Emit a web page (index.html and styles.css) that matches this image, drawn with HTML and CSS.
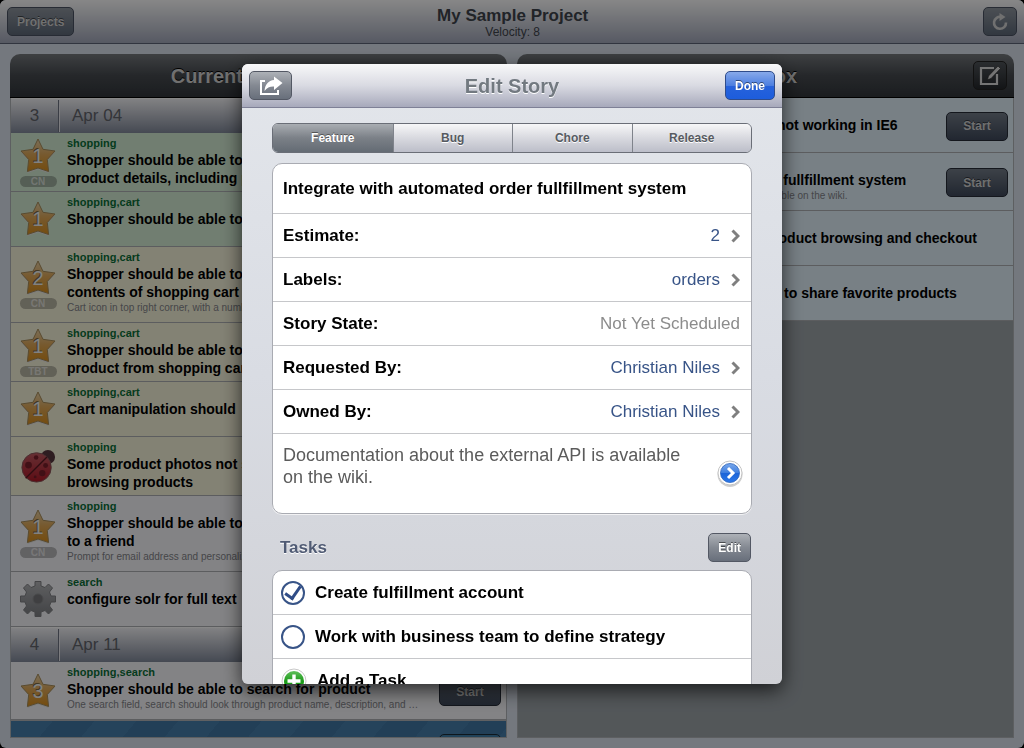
FILE: index.html
```html
<!DOCTYPE html>
<html lang="en">
<head>
  <meta charset="UTF-8">
  <meta name="viewport" content="width=device-width, initial-scale=1.0">
  <title>My Sample Project</title>
  <link rel="stylesheet" href="styles.css">
</head>
<body>
  <!-- shared shapes -->
  <svg width="0" height="0" class="defs" aria-hidden="true">
    <defs>
      <linearGradient id="gold" x1="0" y1="0" x2="0" y2="1">
        <stop offset="0" stop-color="#e8cfa4"/>
        <stop offset="0.5" stop-color="#e0a856"/>
        <stop offset="1" stop-color="#dc901c"/>
      </linearGradient>
      <linearGradient id="steel" x1="0" y1="0" x2="0" y2="1">
        <stop offset="0" stop-color="#b4b5b8"/>
        <stop offset="1" stop-color="#7d7f83"/>
      </linearGradient>
      <linearGradient id="red" x1="0" y1="0" x2="0" y2="1">
        <stop offset="0" stop-color="#c25a62"/>
        <stop offset="1" stop-color="#b01826"/>
      </linearGradient>
      <linearGradient id="green" x1="0" y1="0" x2="0" y2="1">
        <stop offset="0" stop-color="#5fbf5a"/>
        <stop offset="0.5" stop-color="#1f9a1c"/>
        <stop offset="1" stop-color="#0fae0a"/>
      </linearGradient>
      <linearGradient id="blue" x1="0" y1="0" x2="0" y2="1">
        <stop offset="0" stop-color="#7aa8ea"/>
        <stop offset="0.5" stop-color="#3c7de0"/>
        <stop offset="0.52" stop-color="#1c64d8"/>
        <stop offset="1" stop-color="#2a78ea"/>
      </linearGradient>
      <symbol id="star" viewBox="0 0 36 36">
        <path d="M18 2.5 L23 12.3 L35 14.2 L27.3 22.5 L28.6 35 L18 31.5 L7.4 35 L8.7 22.5 L1 14.2 L13 12.3 Z" fill="#e8e8e8"/>
        <path d="M18 1 L23 11.3 L35 13 L27.3 21.5 L28.6 33.5 L18 30 L7.4 33.5 L8.7 21.5 L1 13 L13 11.3 Z" fill="url(#gold)" stroke="#a98f5c"/>
      </symbol>
      <symbol id="chevron" viewBox="0 0 9 14">
        <path d="M1.5 1.5 L7 7 L1.5 12.5" fill="none" stroke="#7f7f7f" stroke-width="3"/>
      </symbol>
    </defs>
  </svg>

  <div class="app">
    <header class="topbar">
      <button class="btn btn-bar">Projects</button>
      <div class="project">
        <h1>My Sample Project</h1>
        <p>Velocity: 8</p>
      </div>
      <button class="btn btn-bar btn-icon" aria-label="Refresh">
        <svg width="18" height="18" viewBox="0 0 18 18">
          <path d="M10.5 4 A6 6 0 1 0 15 9.5" fill="none" stroke="#d4d4d4" stroke-width="2.6"/>
          <path d="M8.5 0 L14.5 4 L8.5 8 Z" fill="#d4d4d4"/>
        </svg>
      </button>
    </header>

    <main class="columns">
      <section class="column">
        <div class="column-head"><h2>Current &amp; Backlog</h2></div>
        <div class="stories">
          <div class="iteration"><span class="num">3</span><span class="date">Apr 04</span></div>
          <article class="story accepted">
            <div class="kind">
              <div class="star"><svg><use href="#star"/></svg><span>1</span></div>
              <span class="owner">CN</span>
            </div>
            <div class="text">
              <p class="labels">shopping</p>
              <h3>Shopper should be able to click on a product, see all<br>product details, including photo and price</h3>
            </div>
          </article>
          <article class="story accepted">
            <div class="kind"><div class="star"><svg><use href="#star"/></svg><span>1</span></div></div>
            <div class="text">
              <p class="labels">shopping,cart</p>
              <h3>Shopper should be able to put product in cart</h3>
            </div>
          </article>
          <article class="story started">
            <div class="kind">
              <div class="star"><svg><use href="#star"/></svg><span>2</span></div>
              <span class="owner">CN</span>
            </div>
            <div class="text">
              <p class="labels">shopping,cart</p>
              <h3>Shopper should be able to view<br>contents of shopping cart</h3>
              <p class="desc">Cart icon in top right corner, with a number indicating how many items</p>
            </div>
          </article>
          <article class="story started">
            <div class="kind">
              <div class="star"><svg><use href="#star"/></svg><span>1</span></div>
              <span class="owner">TBT</span>
            </div>
            <div class="text">
              <p class="labels">shopping,cart</p>
              <h3>Shopper should be able to remove<br>product from shopping cart</h3>
            </div>
          </article>
          <article class="story started">
            <div class="kind"><div class="star"><svg><use href="#star"/></svg><span>1</span></div></div>
            <div class="text">
              <p class="labels">shopping,cart</p>
              <h3>Cart manipulation should</h3>
            </div>
          </article>
          <article class="story started">
            <div class="kind">
              <svg width="36" height="36" viewBox="0 0 38 36">
                <circle cx="29.5" cy="8.5" r="7.5" fill="#57383f"/>
                <circle cx="17.5" cy="19.5" r="15.5" fill="url(#red)" stroke="#8a5a5c"/>
                <path d="M6 31 L28.5 8.5" stroke="#5a1a22" stroke-width="1.4"/>
                <g fill="#7a1f2a">
                  <circle cx="9" cy="17" r="3.6"/>
                  <circle cx="17" cy="9" r="2.4"/>
                  <circle cx="27" cy="17.5" r="2.6"/>
                  <circle cx="23.5" cy="25.5" r="3.4"/>
                  <circle cx="16" cy="29.5" r="1.5"/>
                </g>
              </svg>
            </div>
            <div class="text">
              <p class="labels">shopping</p>
              <h3>Some product photos not scaling when<br>browsing products</h3>
            </div>
          </article>
          <article class="story">
            <div class="kind">
              <div class="star"><svg><use href="#star"/></svg><span>1</span></div>
              <span class="owner">CN</span>
            </div>
            <div class="text">
              <p class="labels">shopping</p>
              <h3>Shopper should be able to recommend<br>to a friend</h3>
              <p class="desc">Prompt for email address and personalized message</p>
            </div>
          </article>
          <article class="story">
            <div class="kind">
              <svg width="36" height="36" viewBox="-18 -18 36 36">
                <path d="M-3 -17.5 H3 V-13 L7 -11.5 L10.5 -15 L14.5 -11 L11.500 -7 L13 -3 H17.5 V3 H13 L11.5 7 L14.5 11 L10.5 15 L7 11.5 L3 13 V17.5 H-3 V13 L-7 11.5 L-10.5 15 L-14.5 11 L-11.5 7 L-13 3 H-17.5 V-3 H-13 L-11.5 -7 L-14.5 -11 L-10.5 -15 L-7 -11.5 L-3 -13 Z" fill="url(#steel)" stroke="#808185" stroke-linejoin="round"/>
                <circle r="5" fill="#77787b" stroke="#8b8c8f"/>
              </svg>
            </div>
            <div class="text">
              <p class="labels">search</p>
              <h3>configure solr for full text</h3>
            </div>
          </article>
          <div class="iteration"><span class="num">4</span><span class="date">Apr 11</span></div>
          <article class="story">
            <div class="kind"><div class="star"><svg><use href="#star"/></svg><span>3</span></div></div>
            <div class="text">
              <p class="labels">shopping,search</p>
              <h3>Shopper should be able to search for product</h3>
              <p class="desc">One search field, search should look through product name, description, and SKU</p>
            </div>
            <button class="btn btn-start">Start</button>
          </article>
          <article class="story release">
            <button class="btn btn-finish" aria-label="Finish"></button>
          </article>
        </div>
      </section>

      <section class="column icebox">
        <div class="column-head">
          <h2>Icebox</h2>
          <button class="btn btn-compose btn-icon" aria-label="Add story">
            <svg width="22" height="22" viewBox="0 0 22 22">
              <path d="M15 3 H2 V19 H18 V9" fill="none" stroke="#dcdcdc" stroke-width="2.2"/>
              <path d="M19 1 L21.5 3.5 L12 13.5 L8.5 14.8 L9.5 11 Z" fill="#dcdcdc" stroke="#222" stroke-width="0.6"/>
            </svg>
          </button>
        </div>
        <div class="stories">
          <article class="story">
            <div class="kind"></div>
            <div class="text">
              <p class="labels">cart</p>
              <h3>Shopping cart update buttons not working in IE6</h3>
            </div>
            <button class="btn btn-start">Start</button>
          </article>
          <article class="story">
            <div class="kind"></div>
            <div class="text">
              <p class="labels">orders</p>
              <h3>Integrate with automated order fullfillment system</h3>
              <p class="desc">Documentation about the external API is available on the wiki.</p>
            </div>
            <button class="btn btn-start">Start</button>
          </article>
          <article class="story">
            <div class="kind"></div>
            <div class="text">
              <p class="labels">blog</p>
              <h3>Shopper should get help for product browsing and checkout</h3>
            </div>
          </article>
          <article class="story">
            <div class="kind"></div>
            <div class="text">
              <p class="labels">shopping</p>
              <h3>Signed in users should be able to share favorite products</h3>
            </div>
          </article>
        </div>
      </section>
    </main>
  </div>

  <div class="backdrop">
    <div class="modal" role="dialog" aria-labelledby="modal-title">
      <header class="modal-head">
        <button class="btn btn-gray btn-share" aria-label="Share">
          <svg width="24" height="20" viewBox="0 0 24 20">
            <path d="M6 5 H2 V18 H19 V14" fill="none" stroke="#fff" stroke-width="2"/>
            <path d="M15 0.5 L23.5 7 L15 14 V10.5 C11 10.3 8 11.5 5.500 15 C6 8.500 9.500 4.500 15 4 Z" fill="#fff"/>
          </svg>
        </button>
        <h2 id="modal-title">Edit Story</h2>
        <button class="btn btn-done">Done</button>
      </header>

      <div class="modal-body">
        <div class="segments">
          <button class="selected">Feature</button>
          <button>Bug</button>
          <button>Chore</button>
          <button>Release</button>
        </div>

        <div class="card">
          <div class="row row-title">Integrate with automated order fullfillment system</div>
          <button class="row"><span>Estimate:</span><span class="value">2</span><svg class="chevron"><use href="#chevron"/></svg></button>
          <button class="row"><span>Labels:</span><span class="value">orders</span><svg class="chevron"><use href="#chevron"/></svg></button>
          <div class="row"><span>Story State:</span><span class="value muted">Not Yet Scheduled</span></div>
          <button class="row"><span>Requested By:</span><span class="value">Christian Niles</span><svg class="chevron"><use href="#chevron"/></svg></button>
          <button class="row"><span>Owned By:</span><span class="value">Christian Niles</span><svg class="chevron"><use href="#chevron"/></svg></button>
          <div class="row row-desc">
            <p>Documentation about the external API is available on the wiki.</p>
            <button class="detail" aria-label="Edit description">
              <svg width="26" height="28" viewBox="0 0 26 28">
                <circle cx="13" cy="14.5" r="12.5" fill="#cfcfcf"/>
                <circle cx="13" cy="13" r="12" fill="#fff" stroke="#c4c4c4"/>
                <circle cx="13" cy="13" r="9.5" fill="url(#blue)" stroke="#2a62bd" stroke-width="0.8"/>
                <path d="M11 8 L16 13 L11 18" fill="none" stroke="#fff" stroke-width="3"/>
              </svg>
            </button>
          </div>
        </div>

        <div class="section-head">
          <h3>Tasks</h3>
          <button class="btn btn-gray btn-edit">Edit</button>
        </div>

        <div class="card">
          <label class="row task"><input type="checkbox" checked>Create fulfillment account</label>
          <label class="row task"><input type="checkbox">Work with business team to define strategy</label>
          <button class="row task">
            <svg width="26" height="26" viewBox="0 0 26 26">
              <circle cx="13" cy="13" r="12" fill="#fff" stroke="#c8c8c8"/>
              <circle cx="13" cy="13" r="10" fill="url(#green)"/>
              <path d="M13 6.5 V19.5 M6.5 13 H19.5" stroke="#fff" stroke-width="3.4"/>
            </svg>
            Add a Task
          </button>
        </div>
      </div>
    </div>
  </div>
</body>
</html>
```
FILE: styles.css
```css
* {
  box-sizing: border-box;
}

body {
  margin: 0;
  background: #000;
  font-family: "Liberation Sans", Arial, Helvetica, sans-serif;
}

h1, h2, h3, p {
  margin: 0;
}

button {
  font-family: inherit;
}

.defs {
  position: absolute;
}

.app {
  display: flex;
  flex-direction: column;
  height: 100vh;
  background: #dce3ee;
  border-radius: 6px;
  overflow: hidden;
}

/* Buttons */
.btn {
  flex: none;
  height: 29px;
  padding: 0 9px;
  border: 1px solid #4d5562;
  border-radius: 5px;
  color: #fff;
  font-size: 12px;
  font-weight: bold;
  text-shadow: 0 -1px 0 rgba(0, 0, 0, 0.5);
}

.btn-bar {
  background: linear-gradient(#8f969f, #5f6a7a);
  border-color: #4a5262;
  color: #d4d4d4;
}

.btn-icon {
  display: flex;
  align-items: center;
  justify-content: center;
  width: 34px;
  padding: 0;
}

.btn-start {
  width: 62px;
  margin: 2px 5px 0;
  background: linear-gradient(#737c88, #3f4a5c);
  border-color: #262c38;
  color: #d4d4d4;
}

.btn-compose {
  background: linear-gradient(#50555a, #25282c);
  border-color: #222;
}

.btn-gray {
  background: linear-gradient(#adb1b7, #848992 50%, #686f7b);
  border-color: #535864;
}

.btn-done {
  width: 50px;
  padding: 0;
  background: linear-gradient(#87a9ea, #4d7fe0 50%, #2762db 51%, #1d5ddc);
  border-color: #2f4c8b;
}

/* Top bar */
.topbar {
  display: flex;
  align-items: center;
  justify-content: space-between;
  height: 44px;
  padding: 0 7px;
  background: linear-gradient(#fff, #a4a9bb);
  border-bottom: 1px solid #5d6477;
}

.project {
  padding-top: 2px;
  margin-right: 32px;
  text-align: center;
}

.project h1 {
  font-size: 17px;
  line-height: 18px;
  color: #3f444c;
}

.project p {
  font-size: 12px;
  line-height: 14px;
  color: #3f444c;
}

/* Columns */
.columns {
  display: grid;
  grid-template-columns: 1fr 1fr;
  gap: 10px;
  flex: 1;
  min-height: 0;
  padding: 10px;
}

.column {
  display: flex;
  flex-direction: column;
  min-width: 0;
  min-height: 0;
}

.column-head {
  display: grid;
  grid-template-columns: 1fr auto 1fr;
  align-items: center;
  flex: none;
  height: 44px;
  padding: 0 7px;
  background: linear-gradient(#75797d, #474b50 50%, #33373c);
  border-bottom: 1px solid #000;
  border-radius: 10px 10px 0 0;
}

.column-head h2 {
  grid-column: 2;
  font-size: 20px;
  line-height: 24px;
  color: #d4d4d4;
  text-shadow: 0 -1px 0 #000;
}

.column-head .btn {
  justify-self: end;
}

.stories {
  flex: 1;
  min-height: 0;
  overflow: hidden;
  border: 1px solid #b0b3b8;
  border-top: 0;
}

.iteration {
  display: flex;
  align-items: center;
  height: 35px;
  background: linear-gradient(#f4f4f7, #838b9c);
  color: #62656c;
  font-size: 17px;
  border-top: 1px solid #fff;
}

.iteration .num {
  width: 48px;
  line-height: 32px;
  border-right: 1px solid #6f7483;
  text-align: center;
}

.iteration .date {
  flex: 1;
  padding-left: 12px;
  line-height: 32px;
  border-left: 1px solid #e8e8ee;
}

.story {
  display: flex;
  align-items: center;
  min-height: 55px;
  background: #f8f8fb;
  border-bottom: 1px solid #aeb0b4;
}

.accepted {
  background: #d6eed6;
}

.started {
  background: #f8f5dc;
}

.kind {
  display: flex;
  flex: none;
  flex-direction: column;
  align-items: center;
  gap: 2px;
  width: 54px;
  margin-right: 2px;
}

.star {
  display: grid;
  place-items: center;
  color: #f4f4f4;
  font-size: 20px;
  line-height: 36px;
  text-shadow: -1px -1px 0 #7a6a48;
}

.star > * {
  grid-area: 1 / 1;
}

.star svg {
  width: 36px;
  height: 36px;
}

.owner {
  width: 37px;
  border-radius: 6px;
  background: rgba(0, 0, 0, 0.25);
  color: rgba(255, 255, 255, 0.6);
  font-size: 10px;
  font-weight: bold;
  line-height: 11px;
  text-align: center;
}

.text {
  flex: 1;
  align-self: flex-start;
  min-width: 0;
  padding: 4px 0;
}

.labels {
  margin-bottom: 2px;
  font-size: 11px;
  font-weight: bold;
  line-height: 12px;
  color: #0a7038;
}

.story h3 {
  font-size: 14px;
  line-height: 18px;
  white-space: nowrap;
  color: #000;
}

.desc {
  margin-bottom: 3px;
  padding-right: 15px;
  overflow: hidden;
  font-size: 10px;
  line-height: 14px;
  color: #84858a;
  white-space: nowrap;
  text-overflow: ellipsis;
}

.release {
  justify-content: flex-end;
  align-items: flex-start;
  border-top: 1px solid #b4b6ba;
  background: repeating-linear-gradient(130deg, #467fac 0 32px, #4078a5 32px 64px);
}

.btn-finish {
  width: 62px;
  margin: 13px 5px;
  background: #3f7da8;
  border-color: #1c2c38;
}

.icebox .stories {
  background: #9da4a9;
}

.icebox .story {
  background: #e2f1fb;
}

/* Edit dialog */
.backdrop {
  position: fixed;
  inset: 0;
  display: flex;
  align-items: center;
  justify-content: center;
  background: rgba(0, 0, 0, 0.47);
}

.modal {
  display: flex;
  flex-direction: column;
  width: 540px;
  max-width: 100%;
  height: calc(100vh - 128px);
  overflow: hidden;
  border-radius: 6px;
  background: linear-gradient(#e3e6eb, #d9dce3 50%, #d0d1d6);
  box-shadow: 0 6px 20px rgba(0, 0, 0, 0.7);
}

.modal-head {
  display: grid;
  grid-template-columns: 1fr auto 1fr;
  align-items: center;
  flex: none;
  height: 44px;
  padding: 0 7px;
  background: linear-gradient(#f8f8f9, #d9dae2 50%, #a7a9bb);
  border-bottom: 1px solid #7e8096;
}

.modal-head h2 {
  font-size: 20px;
  line-height: 24px;
  color: #727980;
  text-shadow: 0 1px 0 #fff;
}

.btn-share {
  display: flex;
  align-items: center;
  justify-content: center;
  width: 43px;
  padding: 0;
}

.btn-done {
  justify-self: end;
}

.modal-body {
  flex: 1;
  min-height: 0;
  padding: 15px 30px 0;
  overflow: hidden;
}

.segments {
  display: grid;
  grid-template-columns: repeat(4, 1fr);
  height: 30px;
  margin-bottom: 10px;
  overflow: hidden;
  border: 1px solid #6a6e77;
  border-radius: 6px;
}

.segments button {
  border: 0;
  border-left: 1px solid #7f838b;
  background: linear-gradient(#f7f7f8, #d8d9df 50%, #bcbec9);
  color: #565a61;
  font-size: 12px;
  font-weight: bold;
  text-shadow: 0 1px 0 #fff;
}

.segments .selected {
  border-left: 0;
  background: linear-gradient(#a9adb2, #7b8087 50%, #646b74);
  color: #fff;
  text-shadow: 0 -1px 0 #555;
}

.card {
  overflow: hidden;
  border: 1px solid #a9abb2;
  border-radius: 10px;
  background: #fff;
  box-shadow: 0 1px 0 #f2f2f4;
}

.row {
  display: flex;
  align-items: center;
  width: 100%;
  height: 44px;
  padding: 0 11px 0 10px;
  border: 0;
  border-bottom: 1px solid #c6c7ca;
  background: none;
  color: #000;
  font-size: 17px;
  font-weight: bold;
  text-align: left;
}

.row:last-child {
  border-bottom: 0;
}

.row-title {
  height: 50px;
}

.value {
  margin-left: auto;
  color: #385487;
  font-weight: normal;
}

.muted {
  color: #8c8c8c;
}

.chevron {
  width: 9px;
  height: 14px;
  margin-left: 11px;
}

.row-desc {
  height: 79px;
  padding-right: 8px;
  color: #5b5b5b;
  font-size: 18px;
  font-weight: normal;
  line-height: 22px;
}

.row-desc p {
  flex: 1;
  align-self: flex-start;
  padding: 10px 24px 0 0;
}

.detail {
  padding: 0;
  border: 0;
  background: none;
}

.detail svg {
  display: block;
}

.section-head {
  display: flex;
  align-items: center;
  justify-content: space-between;
  padding: 19px 1px 8px 8px;
}

.section-head h3 {
  font-size: 17px;
  line-height: 20px;
  color: #505b74;
  text-shadow: 0 1px 0 #fff;
}

.task {
  gap: 10px;
  padding-left: 8px;
}

.task input {
  display: grid;
  place-items: center;
  width: 24px;
  height: 24px;
  margin: 0;
  border: 2px solid #385487;
  border-radius: 50%;
  background: #fff;
  appearance: none;
}

.task input:checked::before {
  content: "";
  width: 7px;
  height: 13px;
  margin-bottom: 3px;
  border: solid #2f4c86;
  border-width: 0 3px 3px 0;
  transform: rotate(35deg);
}
```
